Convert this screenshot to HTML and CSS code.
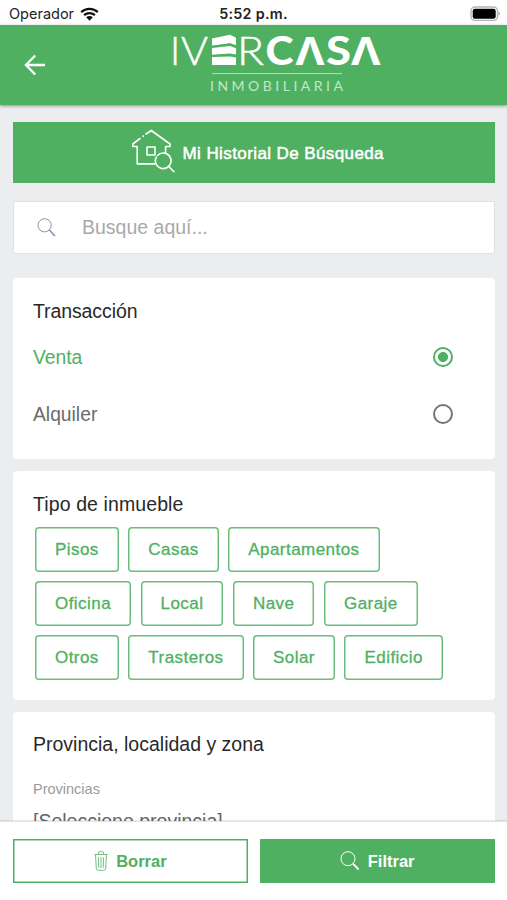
FILE: index.html
```html
<!DOCTYPE html>
<html lang="es">
<head>
    <meta charset="UTF-8">
    <title>Ivercasa Inmobiliaria</title>
    <link rel="stylesheet" href="styles.css">
</head>
<body>
<div class="status-bar">
    <div class="carrier">
        <span>Operador</span>
        <svg width="19" height="14" viewBox="0 0 19 14">
            <path d="M1.2 5.2a12 12 0 0 1 16.6 0M4.1 8.2a7.8 7.8 0 0 1 10.8 0" fill="none" stroke="#111" stroke-width="2.3"/>
            <path d="M6.2 10.3a4.7 4.7 0 0 1 6.6 0L9.5 13.8z" fill="#111"/>
        </svg>
    </div>
    <div class="time">5:52 p.m.</div>
    <svg class="battery" width="31" height="16" viewBox="0 0 31 16">
        <rect x="1" y="1" width="26.5" height="13.4" rx="4" fill="#fff" stroke="#b4b4b4" stroke-width="1.4"/>
        <rect x="2.7" y="2.7" width="23" height="10" rx="2.2" fill="#000"/>
        <path d="M28.5 5.5q3 2.2 0 4.4z" fill="#aaa"/>
    </svg>
</div>

<header class="header">
    <svg class="back" width="22" height="22" viewBox="0 0 22 22" fill="none" stroke="#fff" stroke-width="2.3">
        <path d="M21 11H2.5M11.2 1.5L1.9 11l9.3 9.5"/>
    </svg>
    <svg class="logo" width="222" height="80" viewBox="165 25 222 80">
        <g class="logo-thin">
            <text x="170" y="65">I</text>
            <text x="181" y="65" textLength="27" lengthAdjust="spacingAndGlyphs">V</text>
            <text x="237" y="65" textLength="27" lengthAdjust="spacingAndGlyphs">R</text>
        </g>
        <path d="M212 38.5l18-3.7 6 3v7.5l-6-2.1-18 2.5zM212 48l18-2 6 2.3v6.2l-6-1-18 1.2zM212 57l18-.6 6 1V65h-24z" fill="#fff"/>
        <path d="M212 46.5l18-2.3 6 2.2M212 56l18-1.2 6 1" fill="none" stroke="#4fb062" stroke-width="1.3"/>
        <g class="logo-bold">
            <text x="265.5" y="65" textLength="28" lengthAdjust="spacingAndGlyphs">C</text>
            <text class="lambda" x="295.5" y="65" textLength="29" lengthAdjust="spacingAndGlyphs">Λ</text>
            <text x="326" y="65" textLength="25" lengthAdjust="spacingAndGlyphs">S</text>
            <text class="lambda" x="351" y="65" textLength="29.5" lengthAdjust="spacingAndGlyphs">Λ</text>
        </g>
        <path d="M212 73.6h130" stroke="#b5e0be" stroke-width="1"/>
        <text class="logo-sub" x="210" y="91" textLength="133">INMOBILIARIA</text>
    </svg>
</header>

<main class="content">
    <button class="history">
        <svg width="44" height="44" viewBox="0 0 44 44" fill="none" stroke="#fff" stroke-width="1.6" stroke-linejoin="round" stroke-linecap="round">
            <path d="M9 9.5L1.8 15v2.5h4.4v17.4h17.5M12 7.3l.4-.3M15 5l5.3-3.5L39 15v2.5h-4.4v6"/>
            <rect x="16" y="18" width="8" height="8"/>
            <path d="M26.5 26.5a7.8 7.8 0 1 1-1.2 1.7M38 37.7l5 5"/>
        </svg>
        <span>Mi Historial De Búsqueda</span>
    </button>

    <div class="search">
        <svg width="19" height="19" viewBox="0 0 19 19" fill="none" stroke="#9989a6" stroke-width="1">
            <circle cx="7.6" cy="7.3" r="6.6"/>
            <path d="M12.3 12l5.7 6" stroke-width="1.5"/>
        </svg>
        <span>Busque aquí...</span>
    </div>

    <section class="card transaction">
        <h2>Transacción</h2>
        <div class="option selected"><span>Venta</span><i class="radio"></i></div>
        <div class="option"><span>Alquiler</span><i class="radio"></i></div>
    </section>

    <section class="card types">
        <h2>Tipo de inmueble</h2>
        <div class="chips">
            <div class="chip-row">
                <button class="chip">Pisos</button>
                <button class="chip">Casas</button>
                <button class="chip">Apartamentos</button>
            </div>
            <div class="chip-row">
                <button class="chip">Oficina</button>
                <button class="chip">Local</button>
                <button class="chip">Nave</button>
                <button class="chip">Garaje</button>
            </div>
            <div class="chip-row">
                <button class="chip">Otros</button>
                <button class="chip">Trasteros</button>
                <button class="chip">Solar</button>
                <button class="chip">Edificio</button>
            </div>
        </div>
    </section>

    <section class="card location">
        <h2>Provincia, localidad y zona</h2>
        <label>Provincias</label>
        <div class="select">[Seleccione provincia]</div>
    </section>
</main>

<footer class="footer">
    <button class="action clear">
        <svg width="14" height="20" viewBox="0 0 14 20" fill="none" stroke="#4fb062" stroke-width=".8">
            <path d="M.5 3.5h13M4.5 3.3V1.8Q4.5.7 5.5.7h3q1 0 1 1.1v1.5M1.5 3.6l.8 13.8q.2 1.9 2 1.9h5.4q1.8 0 2-1.9l.8-13.8M4.4 6.2l.4 10.7M7 6.2v10.7M9.6 6.2l-.4 10.7"/>
        </svg>
        <span>Borrar</span>
    </button>
    <button class="action filter">
        <svg width="20" height="20" viewBox="0 0 20 20" fill="none" stroke="#fff" stroke-width="1">
            <circle cx="8" cy="7.7" r="7"/>
            <path d="M13 12.7l5.6 5.8" stroke-width="1.8"/>
        </svg>
        <span>Filtrar</span>
    </button>
</footer>
</body>
</html>
```
FILE: styles.css
```css
* {
    box-sizing: border-box;
}

body {
    margin: 0;
    height: 900px;
    display: flex;
    flex-direction: column;
    overflow: hidden;
    background: #ebedef;
    font-family: "Liberation Sans", Arial, sans-serif;
}

button {
    font-family: inherit;
    margin: 0;
}

svg {
    flex: none;
    display: block;
}

.status-bar {
    height: 25px;
    flex: none;
    display: grid;
    grid-template-columns: 1fr auto 1fr;
    align-items: center;
    padding: 2px 6px 0 9px;
    background: #fff;
    color: #222;
    font-family: Inter, sans-serif;
    font-size: 14.5px;
}

.carrier {
    display: flex;
    align-items: center;
    gap: 6px;
}

.time {
    padding-right: 3px;
    font-weight: 600;
    font-size: 14.3px;
    letter-spacing: 0.3px;
}

.battery {
    justify-self: end;
}

.header {
    height: 80px;
    flex: none;
    display: flex;
    align-items: flex-start;
    padding: 0 24px;
    background: #4fb062;
    box-shadow: 0 1px 3px rgba(0, 0, 0, 0.4);
    z-index: 1;
}

.back {
    margin-top: 29px;
}

.logo {
    margin-left: 119px;
}

.logo text {
    fill: #fff;
}

.logo-thin {
    font-family: Lato, sans-serif;
    font-weight: 300;
    font-size: 39px;
    stroke: #fff;
    stroke-width: 0.5px;
}

.logo-bold {
    font-family: Lato, sans-serif;
    font-weight: 900;
    font-size: 39px;
}

.logo-bold .lambda {
    font-family: "Open Sans", sans-serif;
    font-weight: 700;
}

.logo .logo-sub {
    font-family: Lato, sans-serif;
    font-weight: 400;
    font-size: 14px;
    fill: #c4e7cb;
}

.content {
    flex: 1;
    min-height: 0;
    overflow: hidden;
    padding: 17px 12.5px 0 13px;
}

.history {
    width: 100%;
    height: 61px;
    display: flex;
    align-items: center;
    justify-content: center;
    gap: 8px;
    padding: 0 0 0 7px;
    border: 0;
    background: #4fb062;
    color: #fff;
    font-size: 17px;
    -webkit-text-stroke: 0.5px;
    letter-spacing: 0.4px;
}

.history svg {
    margin-top: -3px;
}

.history span {
    padding-top: 2px;
}

.search {
    height: 53px;
    margin-top: 18px;
    display: flex;
    align-items: center;
    gap: 26px;
    padding-left: 23px;
    border: 1px solid #dfe1e2;
    border-radius: 2px;
    background: #fff;
    color: #a9a9a9;
    font-size: 19.5px;
}

.card {
    padding: 0 20px;
    background: #fff;
    border-radius: 4px;
}

.card h2 {
    margin: 0;
    font-size: 19.5px;
    line-height: 24px;
    font-weight: normal;
    color: #292929;
}

.transaction {
    height: 181px;
    margin-top: 24px;
    padding-top: 21px;
}

.option {
    height: 57.5px;
    display: flex;
    align-items: center;
    justify-content: space-between;
    padding-right: 21.5px;
    color: #6b6b6b;
    font-size: 19.3px;
}

.option span {
    padding-top: 2px;
}

.transaction h2 {
    margin-bottom: 5px;
    letter-spacing: -0.1px;
}

.option.selected {
    color: #4fb062;
}

.radio {
    width: 20px;
    height: 20px;
    border: 2px solid #757575;
    border-radius: 50%;
}

.selected .radio {
    border-color: #4fb062;
    background: radial-gradient(circle, #4fb062 4.7px, #fff 5.3px);
}

.types {
    height: 229px;
    margin-top: 12px;
    padding-top: 21px;
}

.types h2 {
    letter-spacing: 0.1px;
}

.chips {
    display: flex;
    flex-direction: column;
    gap: 9.5px;
    margin: 11px 0 0 2px;
}

.chip-row {
    display: flex;
    gap: 9.5px;
}

.chip {
    height: 44.5px;
    padding: 2px 20px 0;
    border: 0;
    border-radius: 4px;
    box-shadow: inset 0 0 0 1.5px #6bbd7b;
    background: #fff;
    color: #4fb062;
    font-size: 17px;
    letter-spacing: 0.45px;
    -webkit-text-stroke: 0.3px;
}

.location {
    height: 200px;
    margin-top: 12px;
    padding-top: 20px;
}

.location label {
    display: block;
    margin-top: 25px;
    font-size: 14.5px;
    line-height: 17px;
    color: #9b9b9b;
}

.select {
    margin-top: 11px;
    font-size: 19.5px;
    line-height: 24px;
    color: #666;
}

.footer {
    height: 79px;
    flex: none;
    display: flex;
    gap: 12px;
    padding: 17px 12.5px 0 13px;
    border-top: 1px solid #e3e3e3;
    background: #fff;
    box-shadow: 0 -1px 1px rgba(0, 0, 0, 0.08);
    z-index: 1;
}

.action {
    flex: 1;
    height: 44px;
    display: flex;
    align-items: center;
    justify-content: center;
    gap: 8px;
    padding: 0;
    border: 0;
    box-shadow: inset 0 0 0 1.5px #4fb062;
    background: #4fb062;
    color: #fff;
    font-size: 16.5px;
    font-weight: bold;
}

.clear {
    background: #fff;
    color: #4fb062;
}
```
